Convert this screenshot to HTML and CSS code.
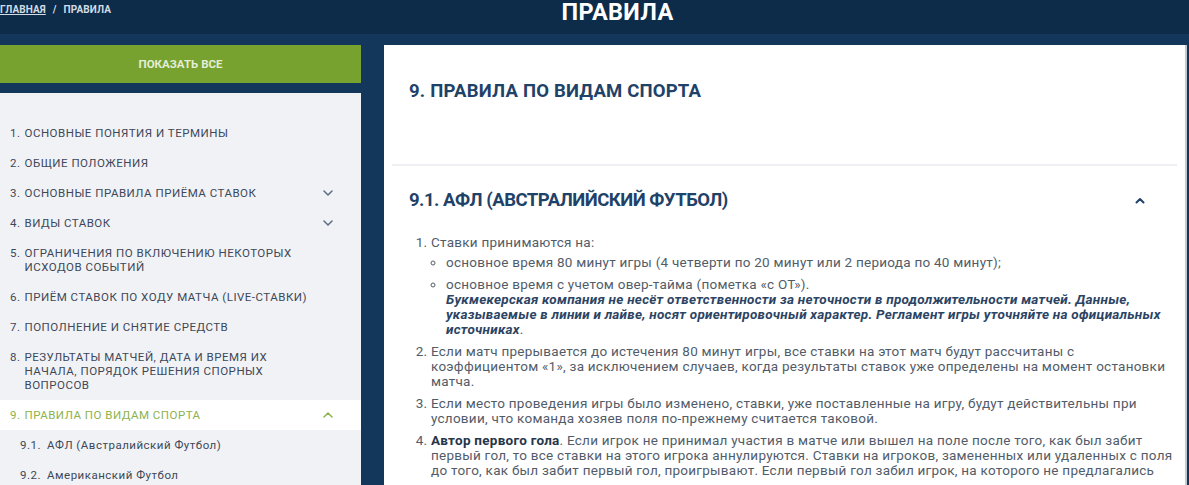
FILE: index.html
```html
<!DOCTYPE html>
<html lang="ru">
<head>
<meta charset="utf-8">
<title>Правила</title>
<link rel="stylesheet" href="styles.css">
</head>
<body>
<header class="top">
  <nav class="crumbs"><a class="crumb-link" href="#">ГЛАВНАЯ</a><span class="crumb-sep">/</span><span>ПРАВИЛА</span></nav>
  <h1 class="title">ПРАВИЛА</h1>
</header>
<main class="layout">
  <aside class="side">
    <button class="show-all" type="button">ПОКАЗАТЬ ВСЕ</button>
    <ul class="toc">
      <li class="toc-item"><span class="num">1.</span><span class="label">ОСНОВНЫЕ ПОНЯТИЯ И ТЕРМИНЫ</span></li>
      <li class="toc-item"><span class="num">2.</span><span class="label">ОБЩИЕ ПОЛОЖЕНИЯ</span></li>
      <li class="toc-item"><span class="num">3.</span><span class="label">ОСНОВНЫЕ ПРАВИЛА ПРИЁМА СТАВОК</span><svg class="chev" viewBox="0 0 10 6"><path d="M1 1l4 4 4-4"/></svg></li>
      <li class="toc-item"><span class="num">4.</span><span class="label">ВИДЫ СТАВОК</span><svg class="chev" viewBox="0 0 10 6"><path d="M1 1l4 4 4-4"/></svg></li>
      <li class="toc-item"><span class="num">5.</span><span class="label">ОГРАНИЧЕНИЯ ПО ВКЛЮЧЕНИЮ НЕКОТОРЫХ<br>ИСХОДОВ СОБЫТИЙ</span></li>
      <li class="toc-item"><span class="num">6.</span><span class="label">ПРИЁМ СТАВОК ПО ХОДУ МАТЧА (LIVE-СТАВКИ)</span></li>
      <li class="toc-item"><span class="num">7.</span><span class="label">ПОПОЛНЕНИЕ И СНЯТИЕ СРЕДСТВ</span></li>
      <li class="toc-item"><span class="num">8.</span><span class="label">РЕЗУЛЬТАТЫ МАТЧЕЙ, ДАТА И ВРЕМЯ ИХ<br>НАЧАЛА, ПОРЯДОК РЕШЕНИЯ СПОРНЫХ<br>ВОПРОСОВ</span></li>
      <li class="toc-item active"><span class="num">9.</span><span class="label">ПРАВИЛА ПО ВИДАМ СПОРТА</span><svg class="chev" viewBox="0 0 10 6"><path d="M1 5l4-4 4 4"/></svg></li>
      <li class="toc-item sub"><span class="num">9.1.</span><span class="label">АФЛ (Австралийский Футбол)</span></li>
      <li class="toc-item sub"><span class="num">9.2.</span><span class="label">Американский Футбол</span></li>
    </ul>
  </aside>
  <article class="panel">
    <div class="sec-head">
      <h2 class="sec-title">9. ПРАВИЛА ПО ВИДАМ СПОРТА</h2>
    </div>
    <div class="sub-head">
      <h3 class="sub-title">9.1. АФЛ (АВСТРАЛИЙСКИЙ ФУТБОЛ)</h3>
      <svg class="sub-chev" viewBox="0 0 10 7"><path d="M1.5 5.5l3.5-3.5 3.5 3.5"/></svg>
    </div>
    <div class="rules">
      <ol class="rule-list">
        <li>Ставки принимаются на:
          <ul class="bullets">
            <li>основное время 80 минут игры (4 четверти по 20 минут или 2 периода по 40 минут);</li>
            <li>основное время с учетом овер-тайма (пометка «с ОТ»).<br><em class="note">Букмекерская компания не несёт ответственности за неточности в продолжительности матчей. Данные,<br>указываемые в линии и лайве, носят ориентировочный характер. Регламент игры уточняйте на официальных<br>источниках</em>.</li>
          </ul>
        </li>
        <li>Если матч прерывается до истечения 80 минут игры, все ставки на этот матч будут рассчитаны с<br>коэффициентом «1», за исключением случаев, когда результаты ставок уже определены на момент остановки<br>матча.</li>
        <li>Если место проведения игры было изменено, ставки, уже поставленные на игру, будут действительны при<br>условии, что команда хозяев поля по-прежнему считается таковой.</li>
        <li><strong class="term">Автор первого гола</strong>. Если игрок не принимал участия в матче или вышел на поле после того, как был забит<br>первый гол, то все ставки на этого игрока аннулируются. Ставки на игроков, замененных или удаленных с поля<br>до того, как был забит первый гол, проигрывают. Если первый гол забил игрок, на которого не предлагались</li>
      </ol>
    </div>
  </article>
</main>
</body>
</html>
```

FILE: styles.css
```css
html, body {
  margin: 0;
  height: 100%;
  overflow: hidden;
}

body {
  background: #12375b;
  font-family: Roboto, "Noto Sans", "DejaVu Sans", sans-serif;
}

.top {
  height: 34px;
  background: #0c2c4a;
  display: grid;
}

.crumbs {
  grid-area: 1 / 1;
  justify-self: start;
  margin-left: 0;
  padding-top: 4px;
  font-size: 10px;
  font-weight: 700;
  color: #d3dbe4;
  line-height: 12px;
  letter-spacing: 0.1px;
}

.crumb-link {
  color: #d3dbe4;
  text-decoration: underline;
}

.crumb-sep {
  margin: 0 7px;
}

.title {
  grid-area: 1 / 1;
  justify-self: center;
  margin: 0 0 0 46px;
  font-size: 23.5px;
  line-height: 24px;
  font-weight: 700;
  color: #ffffff;
  letter-spacing: 0.3px;
}

.layout {
  display: flex;
  align-items: flex-start;
  gap: 23px;
  padding-top: 11px;
}

.side {
  flex: none;
  width: 361px;
}

.show-all {
  display: block;
  width: 100%;
  height: 38px;
  border: 0;
  background: #77a22f;
  color: #e4edd7;
  font-family: Roboto, "Noto Sans", sans-serif;
  font-size: 11.5px;
  font-weight: 700;
  padding: 0;
}

.toc {
  list-style: none;
  margin: 10px 0 0;
  padding: 25px 0 40px;
  background: #f1f2f6;
}

.toc-item {
  display: flex;
  align-items: flex-start;
  padding: 8px 28px 8px 10px;
  font-size: 11.5px;
  line-height: 14px;
  letter-spacing: 0.5px;
  color: #3d4858;
}

.num {
  flex: none;
  margin-right: 4px;
}

.chev {
  margin-left: auto;
  margin-top: 4px;
  width: 10px;
  height: 6px;
  flex: none;
  fill: none;
  stroke: #5b6b82;
  stroke-width: 1.5;
  stroke-linecap: round;
  stroke-linejoin: round;
}

.active {
  background: #ffffff;
  color: #8cb24c;
}

.active .chev {
  stroke: #8cb24c;
}

.sub {
  padding-left: 20px;
}

.sub .num {
  margin-right: 6px;
}

.panel {
  flex: none;
  width: 793px;
  min-height: 460px;
  padding: 0 8px 0 0;
  background: #ffffff;
  border-right: 2px solid #c4c9d0;
}

.sec-head {
  margin-left: 8px;
  height: 121px;
  box-sizing: border-box;
  padding: 35px 17px 0;
  border-bottom: 2px solid #eef0f3;
}

.sec-title,
.sub-title {
  margin: 0;
  font-size: 18.5px;
  line-height: 22px;
  font-weight: 700;
  color: #1f4268;
}

.sec-title {
  letter-spacing: 0.2px;
}

.sub-title {
  letter-spacing: -0.5px;
}

.sub-head {
  display: flex;
  align-items: center;
  justify-content: space-between;
  margin-left: 8px;
  padding: 23px 32px 0 17px;
}

.sub-chev {
  width: 10px;
  height: 7px;
  fill: none;
  stroke: #1f4268;
  stroke-width: 2;
  stroke-linecap: round;
  stroke-linejoin: round;
}

.rules {
  padding: 24px 0 0 33px;
  font-size: 13.5px;
  line-height: 15px;
  letter-spacing: 0.25px;
  color: #525c69;
  white-space: nowrap;
}

.rule-list {
  margin: 0;
  padding-left: 14px;
}

.rule-list > li {
  margin-bottom: 7px;
}

.bullets {
  margin: 5px 0 6px;
  padding-left: 15px;
  list-style: circle;
}

.bullets > li {
  margin-bottom: 7px;
}

.bullets > li:last-child {
  margin-bottom: 0;
}

.note {
  font-weight: 700;
  color: #2c4464;
}

.term {
  font-weight: 700;
  color: #26364a;
}
```
